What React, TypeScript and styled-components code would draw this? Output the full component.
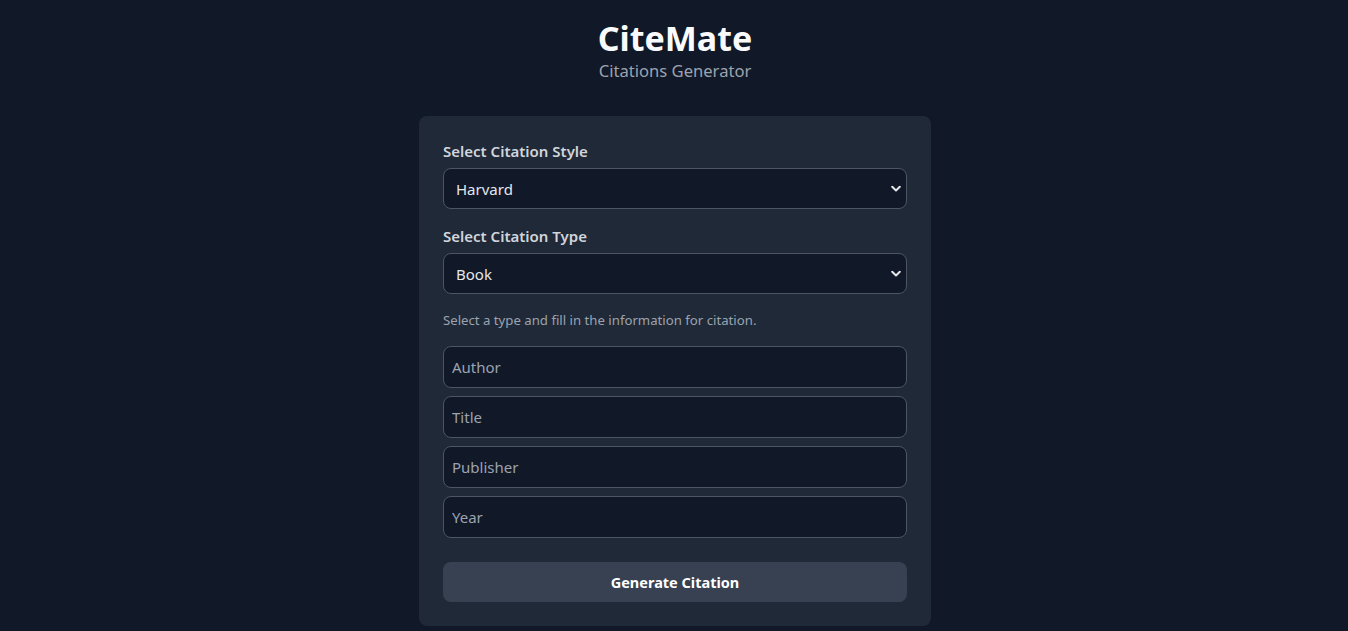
import React from "react";
import styled, { createGlobalStyle } from "styled-components";

const Global = createGlobalStyle`
  html, body { margin: 0; padding: 0; background: #111827; }
  body { font-family: "Noto Sans", "Open Sans", sans-serif; color: #f3f4f6; }
  * { box-sizing: border-box; }
`;

const Page = styled.div`
  min-height: 631px;
  display: flex;
  flex-direction: column;
  align-items: center;
  padding-top: 19px;
  padding-left: 2px;
`;

const Title = styled.h1`
  margin: 0;
  font-size: 34px;
  line-height: 38px;
  font-weight: 700;
  color: #f9fafb;
`;

const Subtitle = styled.p`
  margin: 0;
  font-size: 16.6px;
  line-height: 28px;
  color: #9ca3af;
`;

const Card = styled.form`
  margin-top: 31px;
  width: 512px;
  background: #1f2937;
  border-radius: 8px;
  padding: 24px;
  display: flex;
  flex-direction: column;
`;

const Field = styled.div`
  display: flex;
  flex-direction: column;
  margin-bottom: 16px;
`;

const Label = styled.label`
  font-size: 15px;
  line-height: 22px;
  font-weight: 600;
  color: #d1d5db;
  margin-bottom: 6px;
`;

const SelectWrap = styled.div`
  position: relative;
`;

const Select = styled.select`
  appearance: none;
  width: 100%;
  height: 41px;
  background: #111827;
  color: #e5e7eb;
  border: 1px solid #4b5563;
  border-radius: 8px;
  padding: 0 12px;
  font-family: inherit;
  font-size: 15px;
  outline: none;
`;

const Chevron = styled.svg`
  position: absolute;
  right: 6px;
  top: 50%;
  transform: translateY(-50%);
  pointer-events: none;
`;

const Help = styled.p`
  margin: 0 0 16px;
  font-size: 13.2px;
  line-height: 20px;
  color: #9ca3af;
`;

const Inputs = styled.div`
  display: flex;
  flex-direction: column;
  gap: 8px;
`;

const Input = styled.input`
  width: 100%;
  height: 42px;
  background: #111827;
  color: #e5e7eb;
  border: 1px solid #4b5563;
  border-radius: 8px;
  padding: 0 8px;
  font-family: inherit;
  font-size: 15px;
  outline: none;
  &::placeholder { color: #9ca3af; }
`;

const Button = styled.button`
  margin-top: 24px;
  height: 40px;
  width: 100%;
  border: none;
  border-radius: 8px;
  background: #374151;
  color: #ffffff;
  font-family: inherit;
  font-size: 14.5px;
  font-weight: 700;
  cursor: pointer;
`;

const Arrow = () => (
  <Chevron width="10" height="7" viewBox="0 0 10 7">
    <path d="M1.2 1.2 L5 5 L8.8 1.2" fill="none" stroke="#e5e7eb" strokeWidth="2" strokeLinecap="round" strokeLinejoin="round" />
  </Chevron>
);

export default function App() {
  return (
    <>
      <Global />
      <Page>
        <Title>CiteMate</Title>
        <Subtitle>Citations Generator</Subtitle>
        <Card onSubmit={(e) => e.preventDefault()}>
          <Field>
            <Label>Select Citation Style</Label>
            <SelectWrap>
              <Select defaultValue="Harvard">
                <option>Harvard</option>
                <option>APA</option>
                <option>MLA</option>
              </Select>
              <Arrow />
            </SelectWrap>
          </Field>
          <Field>
            <Label>Select Citation Type</Label>
            <SelectWrap>
              <Select defaultValue="Book">
                <option>Book</option>
                <option>Website</option>
                <option>Journal</option>
              </Select>
              <Arrow />
            </SelectWrap>
          </Field>
          <Help>Select a type and fill in the information for citation.</Help>
          <Inputs>
            <Input placeholder="Author" />
            <Input placeholder="Title" />
            <Input placeholder="Publisher" />
            <Input placeholder="Year" />
          </Inputs>
          <Button type="submit">Generate Citation</Button>
        </Card>
      </Page>
    </>
  );
}
